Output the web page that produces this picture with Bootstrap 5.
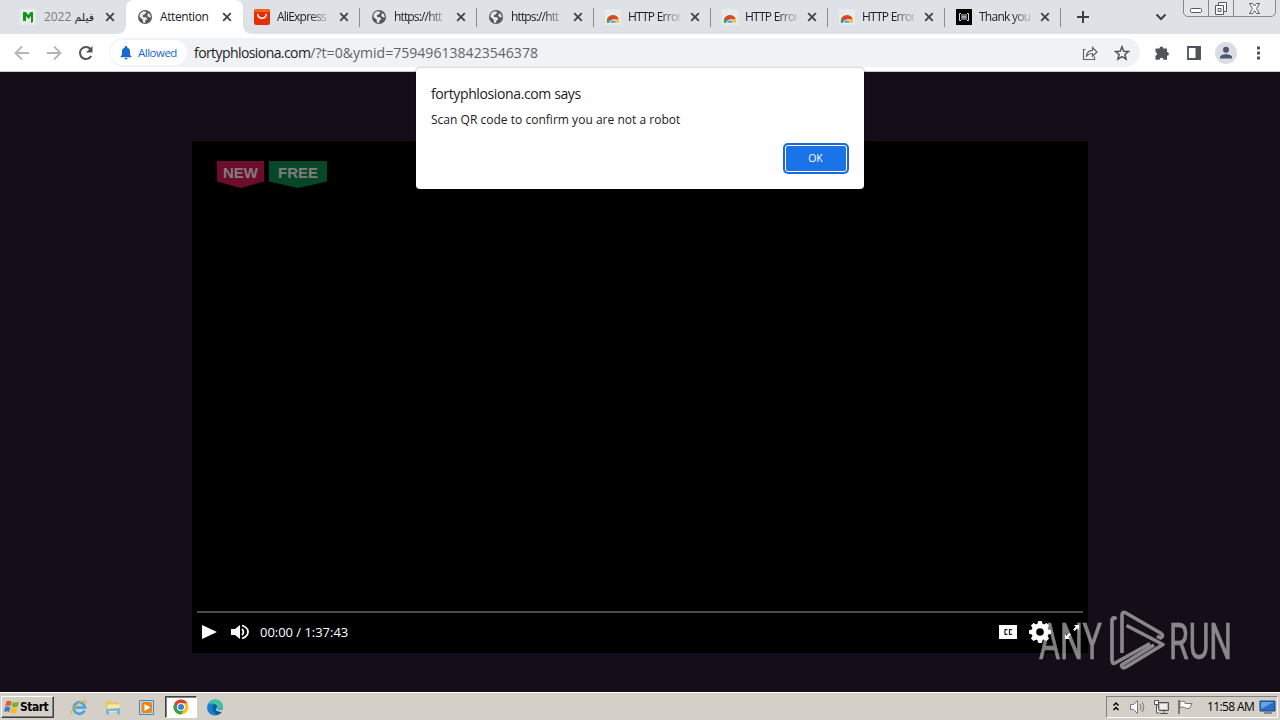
<!DOCTYPE html>
<html lang="en">
<head>
<meta charset="utf-8">
<meta name="viewport" content="width=device-width, initial-scale=1">
<title>Attention</title>
<link href="https://cdn.jsdelivr.net/npm/bootstrap@5.3.0/dist/css/bootstrap.min.css" rel="stylesheet">
<style>
body{height:720px;overflow:hidden;background:#150e19;font-family:"Open Sans","Noto Sans",sans-serif;font-size:12px;line-height:16px;color:#202124}
svg{display:block;flex:none}
.strip{height:34px;background:#dee1e6;padding-left:9px}
.tab{width:117px;height:34px;padding-left:11px;position:relative}
.tab .fav{width:16px;height:16px;flex:none}
.tab .ttl{width:52px;margin-left:7px;white-space:nowrap;letter-spacing:-.75px;-webkit-mask-image:linear-gradient(90deg,#000 62%,rgba(0,0,0,.15) 100%)}
.tab .x{margin-left:10px}
.tab.sep::after{content:"";position:absolute;right:0;top:8px;width:1px;height:19px;background:#8b8e93}
.tab.on .ttl{-webkit-mask-image:none;letter-spacing:-.4px}
.tab .ttl.tight{letter-spacing:-.8px}
.tab .ttl.url-t{letter-spacing:-.85px}
.tab.on{background:#fff;border-radius:8px 8px 0 0}
.tab.on::before,.tab.on::after{content:"";position:absolute;bottom:0;width:8px;height:8px}
.tab.on::before{left:-8px;background:radial-gradient(circle at 0 0,transparent 7.5px,#fff 8px)}
.tab.on::after{right:-8px;background:radial-gradient(circle at 100% 0,transparent 7.5px,#fff 8px)}
.wctl{top:-4px;right:4px;width:93px;height:21px;border:1px solid #85888f;border-radius:0 0 5px 5px;background:#e3e5e9}
.wctl>div{border-right:1px solid #85888f}
.wctl>div:last-child{border:0}
.tools{height:38px;background:#fff;border-bottom:1px solid #c9cbce;padding-left:14px}
.omni{width:1031px;height:29px;border-radius:15px;background:#f0f3f5;margin-left:15px;padding-left:1px}
.chip{width:77px;height:25px;border-radius:13px;background:#fff;color:#1967d2;padding-left:10px}
.chip span{font-size:11.5px;letter-spacing:-.5px;margin-left:6px}
.url{font-size:14px;letter-spacing:-.58px;margin-left:7px;white-space:nowrap}
.url span{color:#5f6368;letter-spacing:.04px}
.stage{height:620px;padding-top:69px}
.player{width:896px;height:512px;background:#000}
.tag{height:27px;font:bold 15px/23px "Liberation Sans",sans-serif;color:#807c7e;text-align:center;clip-path:polygon(0 0,100% 0,100% 76%,50% 100%,0 76%)}
.tag.new{width:47px;background:#6c0d2c}
.tag.free{width:58px;background:#074627}
.bar{height:2px;background:#4c4c4c;margin:0 5px}
.ctl{height:40px;color:#fff;padding:0 0 2px 8px}
.time{font-size:13px;letter-spacing:-.03px;margin-left:10px}
.dlg{left:416px;top:68px;width:448px;height:121px;background:#fff;border-radius:4px;padding:17px 15px;box-shadow:0 0 2px rgba(0,0,0,.5);color:#202124}
.dlg h1{font-size:14px;line-height:18px;font-weight:400;margin:0 0 9px;letter-spacing:-.38px}
.dlg p{margin:0;letter-spacing:.02px}
.okb{width:66px;height:31px;border:2px solid #1a6bd6;border-radius:5px;background:#1a73e8;box-shadow:inset 0 0 0 1px #fff;color:#fff;font-size:10.5px;padding:0 1px 1px 0;position:absolute;right:15px;bottom:15px}
.wm{left:1036px;top:606px}
.task{height:28px;background:#d4d0c8;border-top:1px solid #fff;padding:3px 2px 0 1px}
.startb{width:53px;height:22px;background:#d4d0c8;border:1px solid;border-color:#fff #404040 #404040 #fff;box-shadow:inset -1px -1px #808080;font:bold 12px/20px "DejaVu Sans Condensed","DejaVu Sans",sans-serif;letter-spacing:-.5px;color:#000;padding-left:2px}
.chromeb{width:32px;height:22px;background:#fff;border:1px solid;border-color:#404040 #fff #fff #404040;box-shadow:inset 1px 1px #808080}
.tray{width:172px;height:22px;border:1px solid;border-color:#808080 #fff #fff #808080;color:#000;padding-left:5px;font-size:12px;letter-spacing:-.6px}
</style>
</head>
<body>
<svg width="0" height="0" class="position-absolute">
<defs>
<symbol id="x" viewBox="0 0 10 10"><path d="M1.2 1.2l7.6 7.6M8.8 1.2L1.2 8.8" stroke="#3f4247" stroke-width="1.8"/></symbol>
<symbol id="globe" viewBox="0 0 16 16"><circle cx="8" cy="8" r="7" fill="#55595e"/><path d="M2.5 6.5Q3 3 7 2.3L9.5 3 8 5.3 5.8 6.2 6 8l3 .3 1.4 1.8L8.2 12v2L6 13.4 5.6 10.6 2.5 8zM11 4l1.8 1.2L14 8l-1.6.6L10.2 7z" fill="#e6e8eb"/></symbol>
<symbol id="bow" viewBox="0 0 16 16"><path d="M0 0h16v16H0z" fill="#e9eaed"/><path d="M1.8 12.5a6.2 6.2 0 0 1 12.4 0L13 14H3z" fill="#fbc116"/><path d="M1.8 12.5a6.2 6.2 0 0 1 11.6-3L8 10l-3.5 4H2z" fill="#35a853"/><path d="M2.2 10a6.2 6.2 0 0 1 11.4 0H8l-2 1.2z" fill="#df4332"/><path d="M4.3 14a3.8 3.8 0 0 1 7.4 0z" fill="#4285f4" stroke="#e9eaed"/></symbol>
</defs>
</svg>

<header class="strip d-flex position-relative">
  <div class="tab d-flex align-items-center"><svg class="fav" viewBox="0 0 16 16"><path d="M0 0h16v16H0z" fill="#e7ebe9"/><path d="M3 3h3l2.200 3L10.500 3H13v10l-2 1V7L8.500 10 6 7v5H3z" fill="#15931c"/></svg><div class="ttl text-end" style="-webkit-mask-image:none;letter-spacing:-.2px;padding-right:1px"><span style="color:#777b82">2022</span> <bdi style="font-family:'DejaVu Sans';font-size:11px;letter-spacing:0">فيلم</bdi></div><svg class="x" width="10" height="10"><use href="#x"/></svg></div>
  <div class="tab on d-flex align-items-center"><svg class="fav"><use href="#globe"/></svg><div class="ttl">Attention</div><svg class="x" width="10" height="10"><use href="#x"/></svg></div>
  <div class="tab sep d-flex align-items-center"><svg class="fav" viewBox="0 0 16 16"><rect width="16" height="16" rx="2" fill="#e62e04"/><path d="M1 0h14l1 3H0z" fill="#f0641c"/><path d="M3.800 5.500c.7 5 7.700 5 8.400 0" fill="none" stroke="#fff" stroke-width="1.600" stroke-linecap="round"/></svg><div class="ttl tight">AliExpress</div><svg class="x" width="10" height="10"><use href="#x"/></svg></div>
  <div class="tab sep d-flex align-items-center"><svg class="fav"><use href="#globe"/></svg><div class="ttl url-t">https://htt</div><svg class="x" width="10" height="10"><use href="#x"/></svg></div>
  <div class="tab sep d-flex align-items-center"><svg class="fav"><use href="#globe"/></svg><div class="ttl url-t">https://htt</div><svg class="x" width="10" height="10"><use href="#x"/></svg></div>
  <div class="tab sep d-flex align-items-center"><svg class="fav"><use href="#bow"/></svg><div class="ttl">HTTP Error</div><svg class="x" width="10" height="10"><use href="#x"/></svg></div>
  <div class="tab sep d-flex align-items-center"><svg class="fav"><use href="#bow"/></svg><div class="ttl">HTTP Error</div><svg class="x" width="10" height="10"><use href="#x"/></svg></div>
  <div class="tab sep d-flex align-items-center"><svg class="fav"><use href="#bow"/></svg><div class="ttl">HTTP Error</div><svg class="x" width="10" height="10"><use href="#x"/></svg></div>
  <div class="tab sep d-flex align-items-center" style="width:116px"><svg class="fav" viewBox="0 0 16 16"><path d="M0 0h16v16H0z"/><path d="M5 4.500H3.500v7H5M11 4.500h1.500v7H11M6 5v6M10 5v6M6 8h4M8 5v6" stroke="#ddd" fill="none"/></svg><div class="ttl">Thank you</div><svg class="x" style="margin-left:9px" width="10" height="10"><use href="#x"/></svg></div>
  <svg class="align-self-center" style="margin-left:15px" width="14" height="14"><path d="M7 1v12M1 7h12" stroke="#3c4043" stroke-width="2"/></svg>
  <svg class="align-self-center" style="margin-left:65px" width="12" height="8"><path d="M1.500 1.500L6 6l4.500-4.500" fill="none" stroke="#3c4043" stroke-width="2"/></svg>
  <div class="wctl position-absolute d-flex">
    <div style="width:25px"><svg width="24" height="19"><rect x="6.500" y="11.500" width="11" height="4" rx="1" fill="#fff" stroke="#555860"/></svg></div>
    <div style="width:25px"><svg width="24" height="19"><path d="M9.500 5.500h8v9h-8z" fill="#fff" stroke="#555860"/><path d="M6.500 8.500h8v9h-8z" fill="#fff" stroke="#555860"/><path d="M9 11.500h3v3H9z" fill="#fff" stroke="#555860"/></svg></div>
    <div class="flex-fill"><svg width="41" height="19"><path d="M15.500 6.500h3l2 2.500 2-2.500h3L22.500 11.500l3 5h-3l-2-3-2 3h-3l3-5z" fill="#fff" stroke="#555860"/></svg></div>
  </div>
</header>

<nav class="tools d-flex align-items-center">
  <svg width="16" height="16"><path d="M15 8H2M8 1.500L1.500 8 8 14.500" fill="none" stroke="#b3b5b8" stroke-width="1.800"/></svg>
  <svg style="margin-left:16px" width="16" height="16"><path d="M1 8h13M8 1.500L14.500 8 8 14.500" fill="none" stroke="#b3b5b8" stroke-width="1.800"/></svg>
  <svg style="margin-left:16px" width="16" height="16"><path d="M13.200 11A6 6 0 1 1 12.500 4" fill="none" stroke="#505357" stroke-width="2"/><path d="M14.500 1v6.500H8z" fill="#505357"/></svg>
  <div class="omni d-flex align-items-center">
    <div class="chip d-flex align-items-center"><svg width="12" height="14"><path d="M6 0a1.200 1.200 0 0 1 1.200 1.400C9.200 2 10 3.600 10 5.500v3.300l1.500 1.700v.8H.5v-.8L2 8.800V5.500C2 3.600 2.800 2 4.800 1.400A1.200 1.200 0 0 1 6 0zM4.500 12h3a1.500 1.500 0 0 1-3 0z" fill="#1967d2"/></svg><span>Allowed</span></div>
    <div class="url">fortyphlosiona.com<span>/?t=0&amp;ymid=759496138423546378</span></div>
    <svg class="ms-auto" width="16" height="16"><path d="M3.500 4.500h-2v10h11v-3" fill="none" stroke="#5f6368" stroke-width="1.200"/><path d="M4.500 11c.3-3.500 2-5.500 6-5.700V2.500L15 7l-4.500 4.300V8.500C7.500 8.500 6 9.200 4.500 11z" fill="none" stroke="#5f6368" stroke-width="1.200"/></svg>
    <svg style="margin:0 10px 0 16px" width="16" height="16"><path d="M8 1.800l1.800 4.400 4.700.3-3.600 3 1.200 4.700L8 11.700l-4.100 2.500 1.200-4.700-3.600-3 4.700-.3z" fill="none" stroke="#505357" stroke-width="1.500"/></svg>
  </div>
  <svg style="margin-left:14px" width="16" height="16"><path d="M1.500 3.500h4a1.900 1.900 0 1 1 3.800 0H13V7a1.900 1.900 0 1 1 0 3.800v4H9.500a2 2 0 0 0-4 0h-4v-4a2 2 0 0 0 0-3.900z" fill="#505357"/></svg>
  <svg style="margin-left:16px" width="16" height="16"><path d="M2 2h12v12H2z" fill="none" stroke="#505357" stroke-width="1.800"/><path d="M9.500 1.500h5v13h-5z" fill="#505357"/></svg>
  <svg style="margin-left:13px" width="22" height="22"><circle cx="11" cy="11" r="11" fill="#dadde3"/><circle cx="11" cy="7.800" r="3" fill="#4c5670"/><path d="M5 16.500v-1.300c0-4 12-4 12 0v1.300z" fill="#4c5670"/></svg>
  <svg style="margin-left:19px" width="6" height="16"><path d="M1 1.500h3v3H1zM1 6.500h3v3H1zM1 11.500h3v3H1z" fill="#505357"/></svg>
</nav>

<main class="stage">
  <div class="player mx-auto d-flex flex-column">
    <div class="d-flex" style="padding:20px 0 0 25px;gap:5px"><div class="tag new">NEW</div><div class="tag free">FREE</div></div>
    <div class="bar mt-auto"></div>
    <div class="ctl d-flex align-items-center">
      <svg width="18" height="16"><path d="M2 1l15 7-15 7z" fill="#fff"/></svg>
      <svg style="margin-left:12px" width="20" height="16"><path d="M1 5h4l5-4v14l-5-4H1z" fill="#fff"/><path d="M12 5a4 4 0 0 1 0 6M12 1.500q6 2 6 6.500t-6 6.500" fill="none" stroke="#fff" stroke-width="1.800"/></svg>
      <span class="time">00:00 / 1:37:43</span>
      <svg class="ms-auto" width="20" height="16"><path d="M1 1h18v14H1z" fill="#fff"/><path d="M9.500 5.600H7v4.800h2.500M14 5.600h-2.500v4.800H14" fill="none" stroke="#222" stroke-width="1.200"/></svg>
      <svg style="margin-left:10px" width="24" height="24" viewBox="-12 -12 24 24"><g fill="#fff"><circle r="8.500"/><path d="M-2.600-8l.8-3h3.600l.8 3v16l-.8 3h-3.600l-.8-3z"/><path d="M-2.600-8l.8-3h3.600l.8 3v16l-.8 3h-3.600l-.8-3z" transform="rotate(45)"/><path d="M-2.600-8l.8-3h3.600l.8 3v16l-.8 3h-3.600l-.8-3z" transform="rotate(90)"/><path d="M-2.600-8l.8-3h3.600l.8 3v16l-.8 3h-3.600l-.8-3z" transform="rotate(135)"/></g><circle r="3.800" fill="#000"/></svg>
      <svg style="margin:0 8px 0 12px" width="16" height="16"><path d="M15 1v5l-1.700-1.700-2.600 2.600-1.500-1.500 2.600-2.700L10 1zM1 15v-5l1.700 1.700 2.600-2.600 1.500 1.500-2.600 2.700L6 15z" fill="#fff"/></svg>
    </div>
  </div>
</main>

<footer class="task d-flex">
  <div class="startb d-flex align-items-center"><svg width="16" height="16"><path d="M2.500 2.500Q5 1 7.700 2.500L6.500 7Q4 6 1.200 7.200z" fill="#e65a26"/><path d="M8.700 3Q11.500 4.200 15 2.700L13.700 7.500Q10.500 8.800 7.500 7.500z" fill="#72b52b"/><path d="M1 8.200Q3.500 7 6.200 8.200L5 13Q2.500 11.500 0 13z" fill="#3978cc"/><path d="M7.200 8.600Q10 9.800 13.500 8.500L12 13.500Q9 14.800 6 13.500z" fill="#f5bd1e"/></svg><span>Start</span></div>
  <svg style="margin:3px 0 0 16px" width="18" height="17"><path d="M14.500 11.500A5.700 5.700 0 1 1 15 8.500H5" fill="none" stroke="#43a5df" stroke-width="2.700"/><path d="M2.500 14.500C-1 16 2 9 8 5s9-4 8-.5" fill="none" stroke="#e3b23b" stroke-width="1.300"/></svg>
  <svg style="margin:3px 0 0 16px" width="18" height="17"><path d="M2 2h5l1 1.500h7V13H2z" fill="#e9c662"/><path d="M3.500 5.500h12V13h-12z" fill="#f9e9a2"/><path d="M2 10l14-1v6.500h-3V12H5v3.500H2z" fill="#72b8df"/></svg>
  <svg style="margin:3px 0 0 16px" width="17" height="17"><path d="M1.500 1.500h14v14h-14z" fill="#b6d8ef" stroke="#4b87b6"/><rect x="3.500" y="3" width="10.500" height="11" rx="2" fill="#ef8518"/><path d="M6.500 5l6 3.500-6 3.500z" fill="#fff"/></svg>
  <div class="chromeb d-flex align-items-center justify-content-center" style="margin-left:10px"><svg width="16" height="16"><circle cx="8" cy="8" r="7.500" fill="#fbc116"/><path d="M8 8L1.500 4.250A7.500 7.500 0 0 0 8 15.500L11.300 10z" fill="#30a451"/><path d="M1.500 4.250A7.500 7.500 0 0 1 14.500 4.250H8L5 10z" fill="#e14132"/><circle cx="8" cy="8" r="4" fill="#fff"/><circle cx="8" cy="8" r="3" fill="#3d7de5"/></svg></div>
  <svg style="margin:3px 0 0 9px" width="18" height="17"><circle cx="9" cy="8.500" r="8" fill="#1681c9"/><path d="M1.500 6Q5 0 11 1t6 7q-1 3-5 2.500-2-.5-1-2 0-4-5-4-3 0-4.500 1.500z" fill="#3fc3a0"/><path d="M6.500 8q0-2 2-2.800 2.500.3 2.500 2.800-1.500 2 1 3t4.700 0Q14 16.500 10 15.500 6 13 6.500 8z" fill="#135a9e"/><path d="M10.500 8.500q-.8 1.500 1.500 2.300t5.500-.8L18 12l-3 1q-7-1-4.500-4.500z" fill="#d4d0c8"/></svg>
  <div class="tray ms-auto d-flex align-items-center">
    <svg width="8" height="12"><path d="M1.500 4.500L4 2l2.500 2.500M1.500 9L4 6.500 6.500 9" fill="none" stroke="#000" stroke-width="1.500"/></svg>
    <svg style="margin-left:9px" width="17" height="16"><path d="M1.500 5.500h3l4-4v13l-4-4h-3z" fill="#fff" stroke="#777"/><path d="M11 5q2 3 0 6M13 3q3.500 5 0 10" fill="none" stroke="#888" stroke-width="1.200"/></svg>
    <svg style="margin-left:7px" width="17" height="16"><path d="M5.500 3.500h10v8h-10z" fill="#bbb" stroke="#555"/><path d="M7 5h7v5H7z" fill="#eee"/><path d="M7 14.500h8M11 12v2" stroke="#555"/><path d="M1.500 1.500h4v4h-4zM3.500 6v8h3" fill="#fff" stroke="#555"/></svg>
    <svg style="margin-left:7px" width="17" height="16"><path d="M2 1v14" stroke="#666" stroke-width="1.600"/><path d="M3 2.500q3-1 5 .5v1.500h7l-2.500 5q-3 .5-5-1T3 9z" fill="#fff" stroke="#777"/></svg>
    <span style="margin-left:13px;white-space:nowrap">11:58 AM</span>
    <svg class="ms-auto" width="18" height="14"><path d="M1 1h15v10H1z" fill="#2c6cc8" stroke="#174481"/><path d="M2 2h13L2 9z" fill="#65a1e5"/><path d="M5 13h8" stroke="#345"/></svg>
  </div>
</footer>

<section class="dlg position-absolute">
  <h1>fortyphlosiona.com says</h1>
  <p>Scan QR code to confirm you are not a robot</p>
  <button class="okb" type="button">OK</button>
</section>

<svg class="wm position-absolute" width="200" height="70" opacity=".5">
  <g fill="#fff" font-family="Roboto, sans-serif" font-size="50" font-weight="400" stroke="#fff" stroke-width=".6">
    <text x="3" y="53" textLength="63" lengthAdjust="spacingAndGlyphs">ANY</text>
    <text x="133" y="53" textLength="63" lengthAdjust="spacingAndGlyphs">RUN</text>
  </g>
  <path d="M80.500 13q-4.500-3-4.500 2v39q0 5 4 2.500L114 37.500M86 47V9q0-4 4-2l34.500 20q4 3 0 5L121 30M90.500 19.500L127 38.500 90 61q-4 2-4.500-2L118 39" fill="none" stroke="#fff" stroke-width="3.600" stroke-linejoin="round"/>
</svg>
<script src="https://cdn.jsdelivr.net/npm/bootstrap@5.3.0/dist/js/bootstrap.bundle.min.js"></script>
</body>
</html>
